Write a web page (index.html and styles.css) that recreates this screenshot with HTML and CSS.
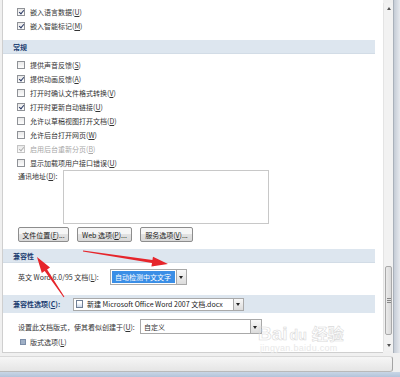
FILE: index.html
```html
<!DOCTYPE html>
<html lang="zh-CN">
  <head>
    <meta charset="UTF-8" />
    <title>Word 选项 - 高级</title>
    <link rel="stylesheet" href="styles.css">
  </head>
  <body>
    <div class="frame">
      <div class="panel">
        <div class="row"><span class="box on"></span>嵌入语言数据(<u>U</u>)</div>
        <div class="row"><span class="box on"></span>嵌入智能标记(<u>M</u>)</div>

        <div class="section">常规</div>
        <div class="row first"><span class="box"></span>提供声音反馈(<u>S</u>)</div>
        <div class="row"><span class="box on"></span>提供动画反馈(<u>A</u>)</div>
        <div class="row"><span class="box"></span>打开时确认文件格式转换(<u>V</u>)</div>
        <div class="row"><span class="box on"></span>打开时更新自动链接(<u>U</u>)</div>
        <div class="row"><span class="box"></span>允许以草稿视图打开文档(<u>D</u>)</div>
        <div class="row"><span class="box"></span>允许后台打开网页(<u>W</u>)</div>
        <div class="row off"><span class="box on"></span>启用后台重新分页(<u>B</u>)</div>
        <div class="row"><span class="box"></span>显示加载项用户接口错误(<u>U</u>)</div>

        <div class="address">
          <span class="label">通讯地址(<u>D</u>):</span>
          <div class="memo"></div>
        </div>

        <div class="buttons">
          <button class="btn w50">文件位置(<u>F</u>)...</button>
          <button class="btn w55">Web 选项(<u>P</u>)...</button>
          <button class="btn w52">服务选项(<u>V</u>)...</button>
        </div>

        <div class="section">兼容性</div>
        <div class="field english">
          <span>英文 Word 6.0/95 文档(<u>L</u>):</span>
          <div class="select picked"><span class="value">自动检测中文文字</span><span class="drop"></span></div>
        </div>

        <div class="section compat">
          <span>兼容性选项(<u>C</u>):</span>
          <div class="select doc">
            <span class="value"><span class="docicon"></span>新建 Microsoft Office Word 2007 文档.docx</span>
            <span class="drop"></span>
          </div>
        </div>

        <div class="field layout">
          <span>设置此文档版式，使其看似创建于(<u>U</u>):</span>
          <div class="select wide"><span class="value">自定义</span><span class="drop"></span></div>
        </div>

        <div class="row expand"><span class="plus"></span>版式选项(<u>L</u>)</div>
      </div>

      <div class="scrollbar">
        <span class="arrow up"></span>
        <div class="track"><div class="thumb"><span class="grip"></span></div></div>
        <span class="arrow down"></span>
      </div>
      <div class="edge"></div>
    </div>

    <div class="footer"><div class="bar"></div></div>

    <div class="watermark">
      <span class="bai">Bai</span><span class="du">du</span><span class="jy">经验</span>
      <div class="url">jingyan.baidu.com</div>
    </div>

    <svg class="arrows" width="400" height="377" viewBox="0 0 400 377">
      <polygon points="83.1,250.5 152.4,260.1 153,256.7 168,264 151.4,266.5 152,263.1 82.9,251.5" />
      <polygon points="64.4,296.7 47.1,269.4 50,267.4 37,257 41.8,273 44.7,271 63.6,297.3" />
    </svg>
  </body>
</html>
```

FILE: styles.css
```css
body {
  margin: 0;
  width: 400px;
  height: 377px;
  overflow: hidden;
  position: relative;
  background: #f0f0f0;
  font-family: "Noto Sans CJK SC", "Liberation Sans", sans-serif;
  font-size: 7px;
  color: #333;
}
u {
  text-decoration: underline;
}
.frame {
  display: flex;
  height: 353px;
}
.panel {
  width: 382px;
  margin-left: 2px;
  border-left: 1px solid #cfcfcf;
  border-bottom: 1px solid #cfcfcf;
  background: #fff;
  padding-top: 5px;
  box-sizing: border-box;
}
.row {
  height: 14px;
  display: flex;
  align-items: center;
  padding-left: 14px;
  white-space: nowrap;
}
.row.first {
  margin-top: 4px;
}
.row.off {
  color: #a8a8a8;
}
.box {
  width: 6px;
  height: 6px;
  border: 1px solid #8f9297;
  background: linear-gradient(#e9e9e9, #fdfdfd);
  margin-right: 5px;
  position: relative;
}
.box.on::after {
  content: "";
  position: absolute;
  left: 1.5px;
  top: 0;
  width: 2px;
  height: 4px;
  border-right: 1px solid #2b3a66;
  border-bottom: 1px solid #2b3a66;
  transform: rotate(40deg);
}
.row.off .box {
  border-color: #c4c4c4;
}
.row.off .box.on::after {
  border-color: #b0b0b0;
}
.section {
  margin: 7px 8px 0 0;
  height: 14px;
  background: #dde6ef;
  border-bottom: 1px solid #d2dce6;
  box-sizing: border-box;
  display: flex;
  align-items: center;
  padding-left: 10px;
  font-weight: bold;
  color: #223f72;
}
.address {
  display: flex;
  padding-left: 15px;
}
.address .label {
  width: 45px;
  margin-top: 1px;
}
.memo {
  width: 204px;
  height: 52px;
  border: 1px solid #c8c8c8;
  background: #fff;
}
.buttons {
  display: flex;
  gap: 8px;
  padding-left: 15px;
  margin-top: 3px;
}
.btn {
  height: 15px;
  padding: 0;
  font-family: inherit;
  font-size: 7px;
  color: #222;
  border: 1px solid #8d8d8d;
  border-radius: 2px;
  background: linear-gradient(#f6f6f6 50%, #e2e2e2 50%, #d9d9d9);
}
.w50 {
  width: 51px;
}
.w55 {
  width: 55px;
}
.w52 {
  width: 53px;
}
.field {
  display: flex;
  align-items: center;
  padding-left: 15px;
  white-space: nowrap;
}
.english {
  margin-top: 6px;
  height: 16px;
}
.english > span:first-child {
  width: 92px;
}
.select {
  display: flex;
  align-items: stretch;
  border: 1px solid #a9a9a9;
  background: #fff;
  box-sizing: border-box;
  white-space: nowrap;
}
.select .value {
  flex: 1;
  display: flex;
  align-items: center;
  padding-left: 3px;
  overflow: hidden;
}
.select .drop {
  width: 9px;
  flex: none;
  border-left: 1px solid #a9a9a9;
  background: linear-gradient(#f8f8f8, #dcdcdc);
  position: relative;
}
.select .drop::after {
  content: "";
  position: absolute;
  left: 2px;
  top: 50%;
  margin-top: -1px;
  border-left: 2.5px solid transparent;
  border-right: 2.5px solid transparent;
  border-top: 3px solid #222;
}
.picked {
  width: 77px;
  height: 16px;
}
.picked .value {
  background: #3a8ee6;
  color: #fff;
  margin: 1px;
  padding-left: 3px;
}
.compat {
  margin-top: 10px;
  height: 18px;
  padding-left: 10px;
  border-bottom: none;
}
.compat > span:first-child {
  width: 60px;
}
.doc {
  width: 171px;
  height: 13px;
  font-weight: normal;
  color: #222;
  font-size: 7px;
}
.doc .value {
  padding-left: 2px;
}
.docicon {
  width: 7px;
  height: 8px;
  flex: none;
  margin-right: 4px;
  border: 1px solid #6f7f96;
  background: linear-gradient(#fff 30%, #c8d6ea);
  box-sizing: border-box;
}
.layout {
  margin-top: 6px;
  height: 15px;
}
.layout > span:first-child {
  width: 122px;
}
.wide {
  width: 122px;
  height: 15px;
}
.wide .drop {
  width: 10px;
}
.expand {
  margin-top: 1px;
  height: 14px;
  padding-left: 17px;
}
.plus {
  width: 4px;
  height: 4px;
  margin-right: 4px;
  background: #9fb0c6;
  border: 1px solid #7c8ea8;
}
.scrollbar {
  width: 10px;
  margin-top: 3px;
  height: 348px;
  display: flex;
  flex-direction: column;
  align-items: center;
  background: #f2f2f2;
  border-left: 1px solid #e4e4e4;
  box-sizing: border-box;
}
.arrow {
  margin: 4px 0;
  border-left: 2px solid transparent;
  border-right: 2px solid transparent;
}
.arrow.up {
  border-bottom: 3px solid #555;
}
.arrow.down {
  border-top: 3px solid #555;
}
.track {
  flex: 1;
  width: 100%;
  display: flex;
  flex-direction: column;
  justify-content: flex-end;
}
.thumb {
  height: 67px;
  margin: 0 1px 5px;
  border: 1px solid #a9a9a9;
  border-radius: 2px;
  background: linear-gradient(90deg, #eaeaea, #dadada);
  display: flex;
  align-items: center;
  justify-content: center;
}
.grip {
  width: 4px;
  height: 5px;
  background: repeating-linear-gradient(#888 0 1px, #e2e2e2 1px 2px);
}
.edge {
  width: 6px;
  border-left: 1px solid #aab1bb;
  background: linear-gradient(90deg, #c5ccd6, #e6e9ee);
}
.footer {
  height: 24px;
  display: flex;
}
.bar {
  margin-top: 3px;
  width: 393px;
  height: 16px;
  border-top: 1px solid #d9d9d9;
  border-right: 1px solid #a4a4a4;
  border-bottom: 1px solid #b9b9b9;
  border-radius: 0 3px 3px 0;
  background: linear-gradient(#f6f6f6, #e5e5e5);
  box-sizing: border-box;
}
body::after {
  content: "";
  position: absolute;
  left: 0;
  right: 0;
  bottom: 0;
  height: 5px;
  background: linear-gradient(#c9d6e6, #b3c4da);
}
.watermark {
  position: absolute;
  left: 258px;
  top: 321px;
  width: 120px;
  color: transparent;
  font-family: "Liberation Sans", sans-serif;
  white-space: nowrap;
}
.bai,
.du,
.jy {
  font-size: 19px;
  font-weight: bold;
  -webkit-text-stroke: 0.6px #dadada;
}
.du {
  font-size: 14px;
  margin: 0 5px 0 2px;
}
.jy {
  font-family: "Noto Sans CJK SC", sans-serif;
  font-size: 16px;
}
.url {
  margin-top: -2px;
  padding-left: 2px;
  font-size: 9px;
  color: #e8e8e8;
  letter-spacing: 0.3px;
}
.arrows {
  position: absolute;
  left: 0;
  top: 0;
  pointer-events: none;
}
.arrows polygon {
  fill: #e6252b;
}
```
